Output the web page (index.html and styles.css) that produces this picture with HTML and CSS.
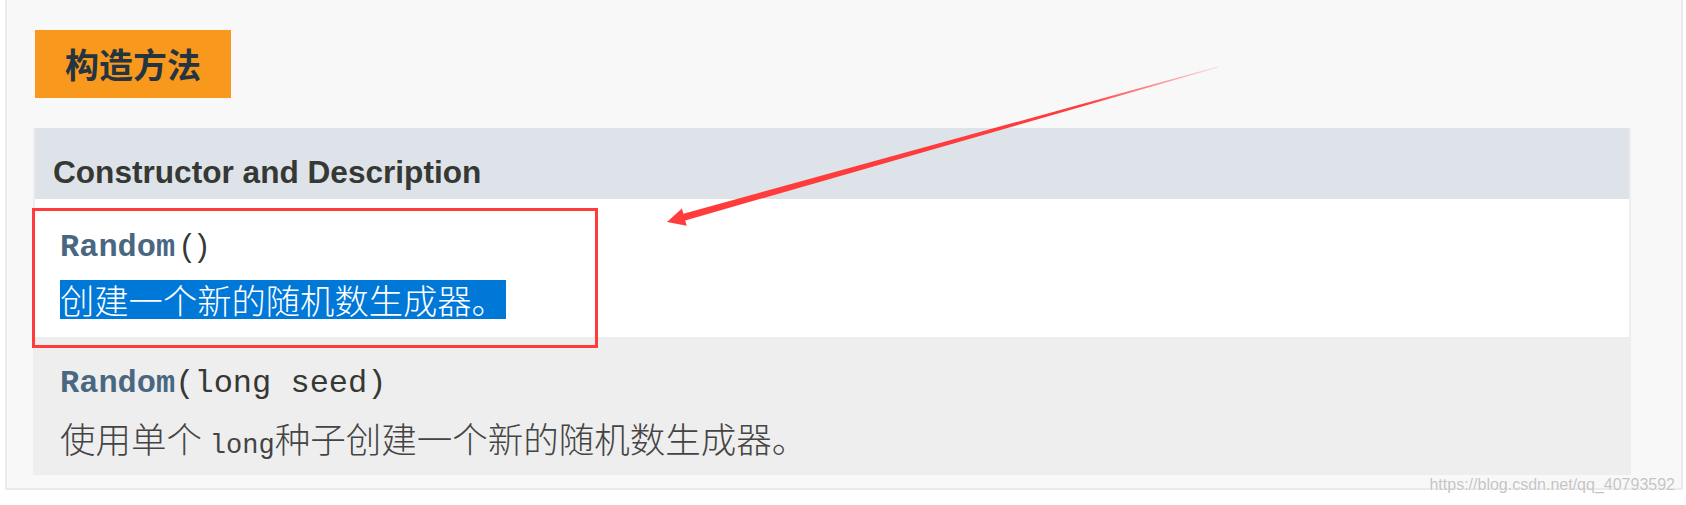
FILE: index.html
```html
<!DOCTYPE html>
<html lang="zh-CN">
<head>
<meta charset="utf-8">
<title>Random 构造方法</title>
<link rel="stylesheet" href="styles.css">
</head>
<body>
<div class="page">
  <div class="panel">
    <div class="caption-wrap"><span class="caption">构造方法</span></div>
    <div class="summary">
      <div class="summary-head">Constructor and Description</div>
      <div class="row row-white">
        <div class="sig"><span class="name">Random</span><span class="parens">()</span></div>
        <div class="desc"><span class="selected">创建一个新的随机数生成器。</span></div>
      </div>
      <div class="row row-alt">
        <div class="sig"><span class="name">Random</span><span class="params">(long seed)</span></div>
        <div class="desc desc-wide">使用单个 <code class="inline-code">long</code>种子创建一个新的随机数生成器。</div>
      </div>
    </div>
  </div>
  <div class="mark-box"></div>
  <svg class="arrow" width="1686" height="505" viewBox="0 0 1686 505">
    <defs>
      <linearGradient id="fade" x1="1218" y1="67" x2="667" y2="222" gradientUnits="userSpaceOnUse">
        <stop offset="0" stop-color="#ff3b3b" stop-opacity="0.15"/>
        <stop offset="0.25" stop-color="#ff3b3b" stop-opacity="1"/>
        <stop offset="1" stop-color="#ff3b3b" stop-opacity="1"/>
      </linearGradient>
    </defs>
    <polygon points="667,222 686.7,225.8 685.2,220.5 1218.1,67.4 1217.9,66.6 683.4,213.7 681.9,208.4" fill="url(#fade)"/>
  </svg>
  <div class="watermark">https://blog.csdn.net/qq_40793592</div>
</div>
</body>
</html>
```

FILE: styles.css
```css
html, body {
  margin: 0;
  padding: 0;
  background: #ffffff;
}

.page {
  position: relative;
  width: 1686px;
  height: 505px;
  overflow: hidden;
}

.panel {
  box-sizing: border-box;
  width: 1678px;
  margin-left: 5px;
  background: #f8f8f8;
  border-left: 2px solid #ebebeb;
  border-right: 2px solid #ebebeb;
  border-bottom: 2px solid #ebebeb;
  padding: 30px 0 13px 0;
}

.caption-wrap {
  display: flex;
  padding-left: 28px;
}

.caption {
  display: block;
  height: 68px;
  line-height: 68px;
  padding: 0 30px;
  background: #f8981d;
  color: #253441;
  font-family: "Noto Sans CJK SC", "Liberation Sans", sans-serif;
  font-weight: 700;
  font-size: 34px;
}

.summary {
  box-sizing: border-box;
  width: 1598px;
  margin: 30px 0 0 26px;
  border-left: 2px solid #eeeeef;
  border-right: 2px solid #eeeeef;
}

.summary-head {
  height: 71px;
  box-sizing: border-box;
  padding: 24px 18px 7px;
  line-height: 40px;
  background: #dee3e9;
  color: #353833;
  font-family: "Liberation Sans", Arial, sans-serif;
  font-weight: 700;
  font-size: 31.6px;
}

.row {
  height: 138px;
  box-sizing: border-box;
  padding: 27px 25px 18px;
}

.row-white {
  background: #ffffff;
}

.row-alt {
  background: #eeeeef;
}

.sig {
  height: 40px;
  line-height: 40px;
  font-family: "Liberation Mono", "Courier New", monospace;
  font-size: 32px;
  color: #353833;
  white-space: pre;
}

.name {
  font-weight: 700;
  color: #4a6782;
}

.parens {
  font-family: "Liberation Sans", Arial, sans-serif;
  font-size: 31px;
  letter-spacing: 6px;
  margin-left: 6px;
  color: #353833;
}

.params {
  color: #353833;
}

.desc {
  margin-top: 14px;
  height: 39px;
  line-height: 39px;
  font-family: "Noto Sans CJK SC", sans-serif;
  font-weight: 300;
  font-size: 34.3px;
  color: #444444;
  white-space: nowrap;
}

.desc-wide {
  font-size: 35.5px;
}

.selected {
  display: inline-block;
  height: 39px;
  line-height: 39px;
  background: #0078d7;
  color: #ffffff;
}

.inline-code {
  font-family: "Liberation Mono", "Courier New", monospace;
  font-size: 27px;
  color: #444444;
}

.mark-box {
  position: absolute;
  left: 32px;
  top: 208px;
  width: 566px;
  height: 140px;
  box-sizing: border-box;
  border: 3px solid #ff3b3b;
}

.arrow {
  position: absolute;
  left: 0;
  top: 0;
}

.watermark {
  position: absolute;
  right: 11px;
  top: 476px;
  font-family: "Liberation Sans", Arial, sans-serif;
  font-size: 16px;
  line-height: 18px;
  color: #c4c4c4;
  text-shadow: 0 0 1px #ffffff, 0 0 1px #ffffff;
}
```
